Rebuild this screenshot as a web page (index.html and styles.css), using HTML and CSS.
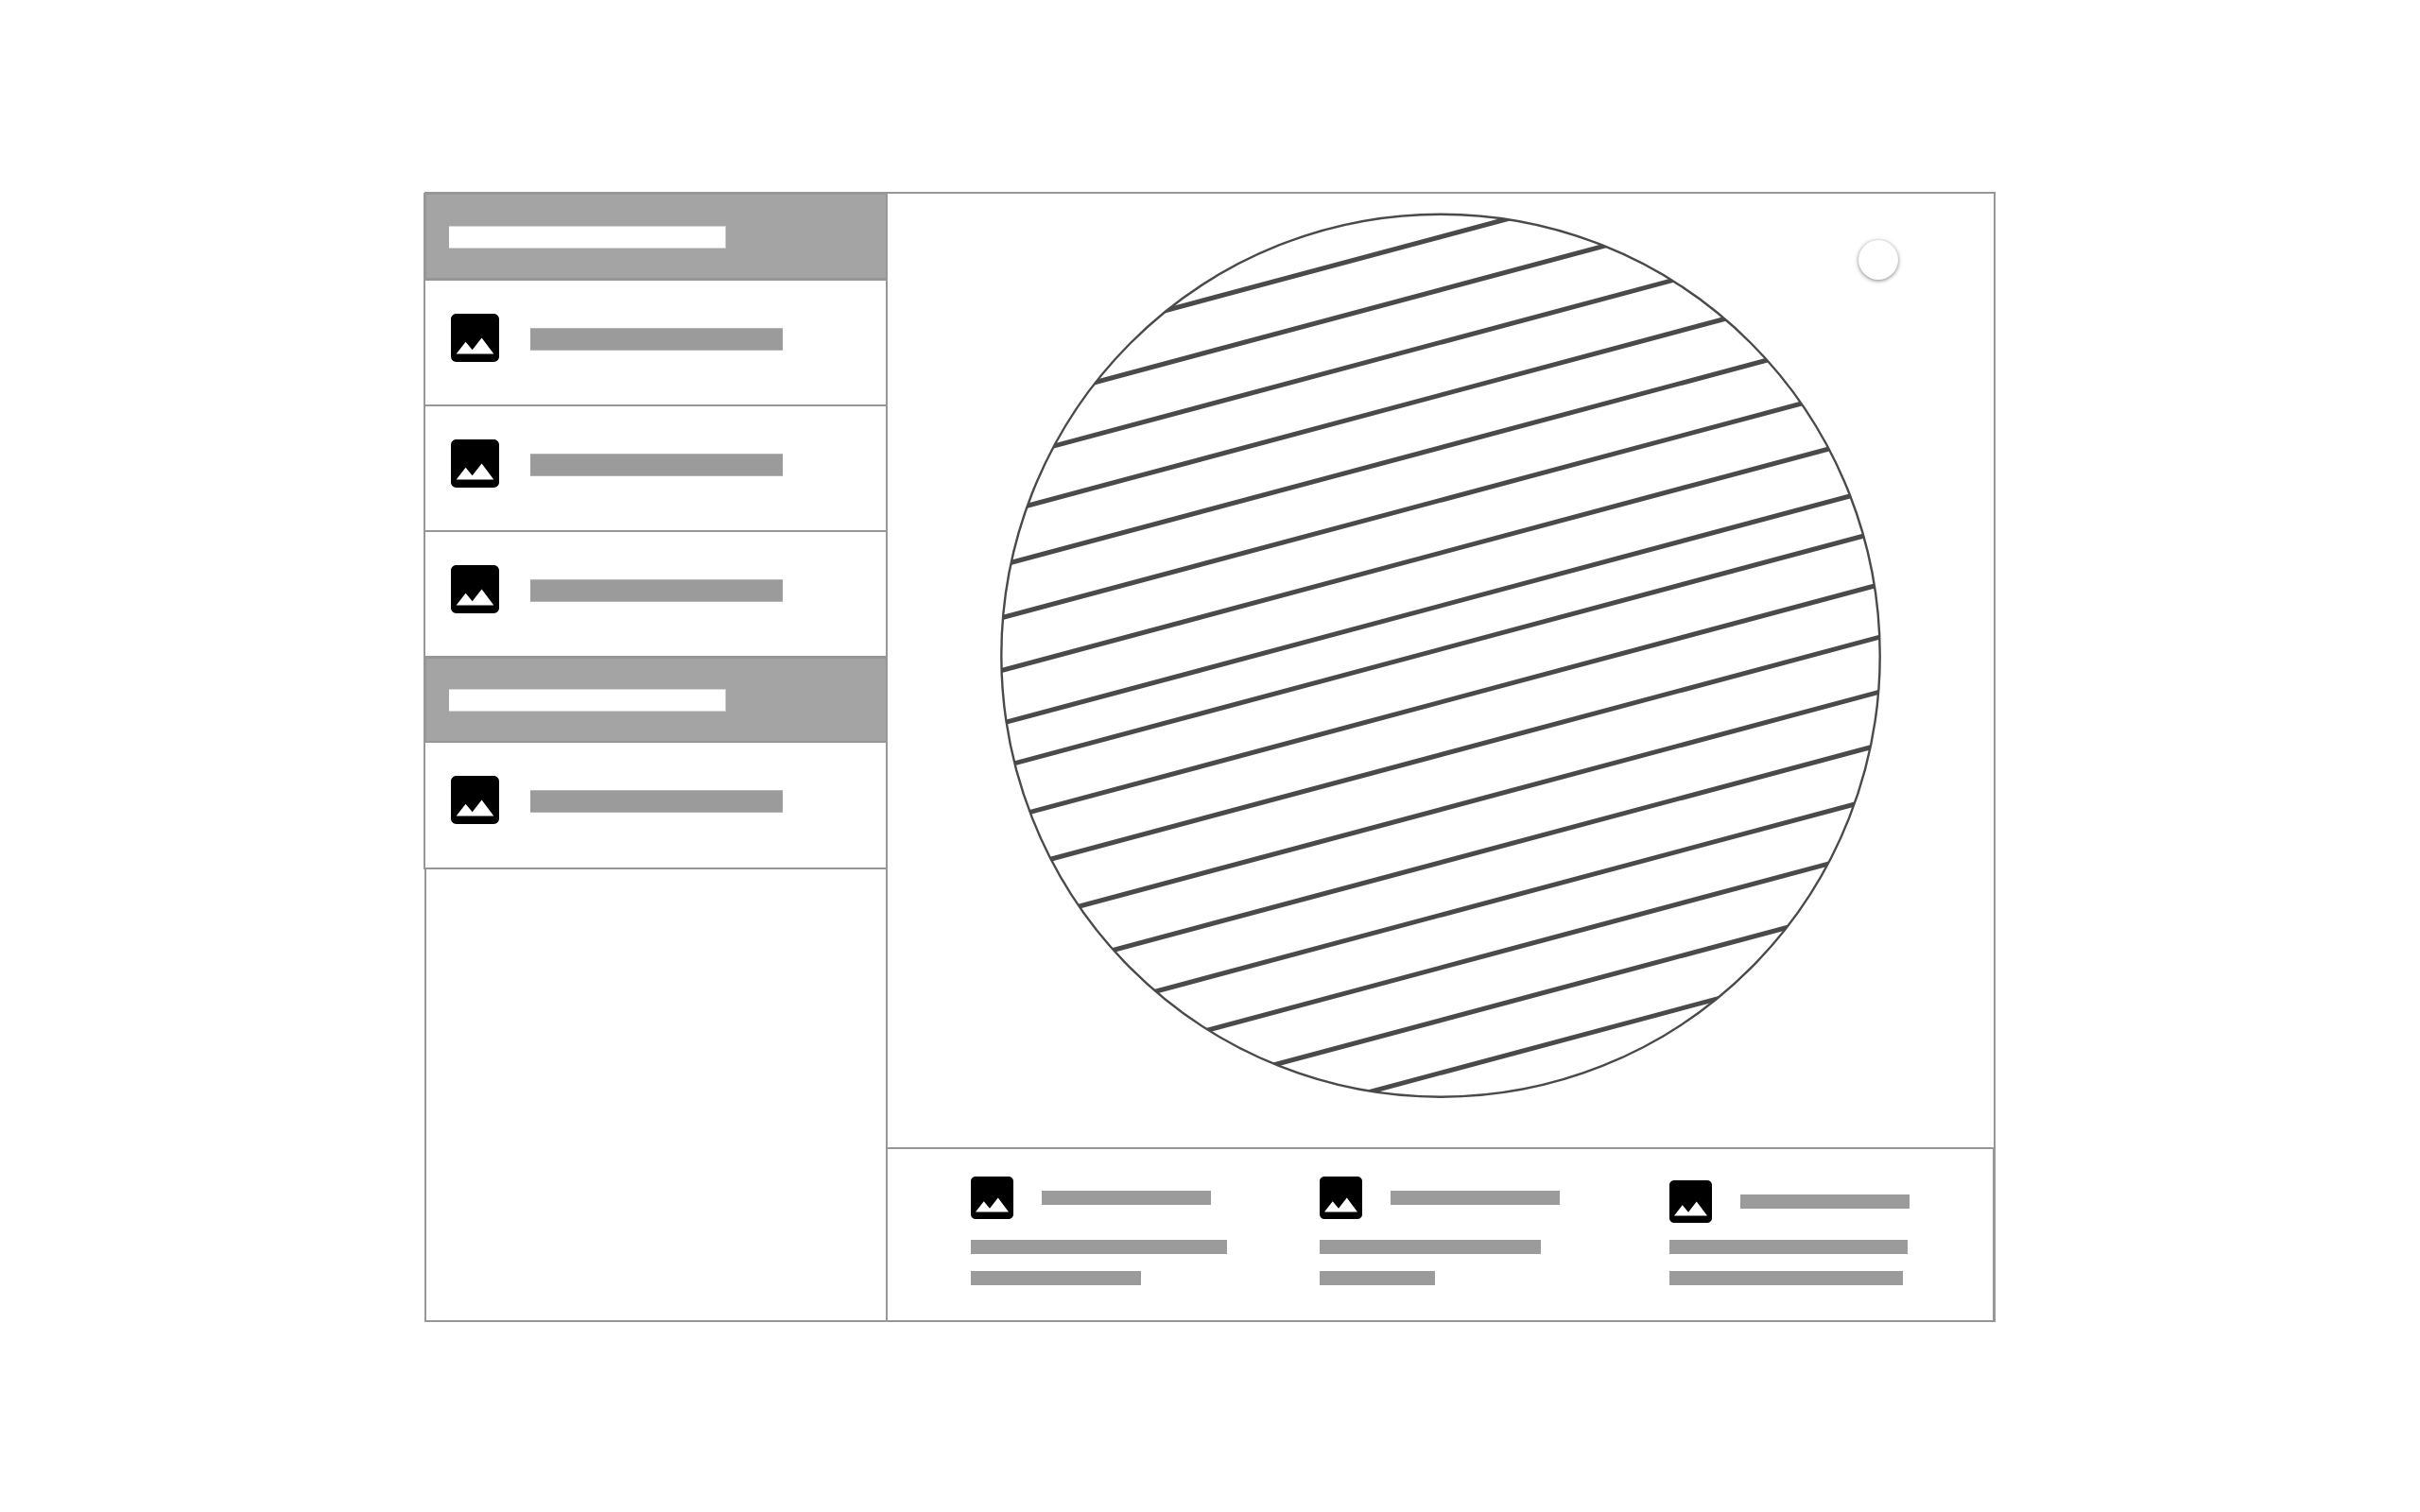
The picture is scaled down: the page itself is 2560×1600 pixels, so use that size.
FILE: index.html
```html
<!DOCTYPE html>
<html lang="en">
<head>
<meta charset="utf-8">
<meta name="viewport" content="width=device-width, initial-scale=1">
<title>Wireframe</title>
<link rel="stylesheet" href="styles.css">
</head>
<body>
<svg class="sprite" aria-hidden="true">
  <symbol id="image" viewBox="3 3 18 18">
    <path d="M21 19V5c0-1.1-.9-2-2-2H5c-1.1 0-2 .9-2 2v14c0 1.1.9 2 2 2h14c1.1 0 2-.9 2-2zM8.5 13.5l2.5 3.01L14.5 12l4.5 6H5l3.500-4.500z"/>
  </symbol>
</svg>
<div class="frame">
  <aside class="sidebar">
    <div class="list">
      <div class="section section-first"><span class="section-bar"></span></div>
      <div class="item"><svg class="icon"><use href="#image"/></svg><span class="bar"></span></div>
      <div class="item"><svg class="icon"><use href="#image"/></svg><span class="bar"></span></div>
      <div class="item"><svg class="icon"><use href="#image"/></svg><span class="bar"></span></div>
      <div class="section"><span class="section-bar"></span></div>
      <div class="item item-last"><svg class="icon"><use href="#image"/></svg><span class="bar"></span></div>
    </div>
  </aside>
  <main class="main">
    <section class="stage">
      <svg class="disc" viewBox="1058 225 932 937" aria-hidden="true">
        <defs>
          <clipPath id="disc-clip"><ellipse cx="1524" cy="693.7" rx="465" ry="467.500"/></clipPath>
        </defs>
        <g clip-path="url(#disc-clip)">
          <path class="stripes" d="M1040 380.300L2010 120.400M1040 436.300L2010 176.400M1040 492L2010 232.100M1040 547.700L2010 287.800M1040 603.300L2010 343.400M1040 659L2010 399.100M1040 714.700L2010 454.800M1040 770.700L2010 510.800M1040 816.700L2010 556.800M1040 872.700L2010 612.800M1040 928.300L2010 668.400M1040 986.300L2010 726.400M1040 1042.300L2010 782.400M1040 1098L2010 838.100M1040 1153.700L2010 893.800M1040 1209.300L2010 949.400M1040 1265L2010 1005.100"/>
        </g>
        <ellipse class="rim" cx="1524" cy="693.7" rx="464.700" ry="467"/>
      </svg>
      <button class="knob" type="button" aria-label="Toggle"></button>
    </section>
    <section class="cards">
      <article class="card">
        <div class="card-head"><svg class="card-icon"><use href="#image"/></svg><span class="line line-title"></span></div>
        <span class="line line-271"></span>
        <span class="line line-180"></span>
      </article>
      <article class="card">
        <div class="card-head"><svg class="card-icon"><use href="#image"/></svg><span class="line line-title"></span></div>
        <span class="line line-234"></span>
        <span class="line line-122"></span>
      </article>
      <article class="card card-low">
        <div class="card-head"><svg class="card-icon"><use href="#image"/></svg><span class="line line-title"></span></div>
        <span class="line line-252"></span>
        <span class="line line-247"></span>
      </article>
    </section>
  </main>
</div>
</body>
</html>
```
FILE: styles.css
```css
:root {
  --line: #979797;
  --bar: #9b9b9b;
  --header: #a4a4a4;
  --ink: #4a4a4a;
}

* {
  box-sizing: border-box;
}

body {
  margin: 0;
  padding: 203px 24px;
  background: #fff;
  font-family: "Liberation Sans", sans-serif;
}

.sprite {
  position: absolute;
  width: 0;
  height: 0;
}

.frame {
  display: grid;
  grid-template-columns: 488px 1fr;
  max-width: 1662px;
  margin: 0 auto;
  border: 2px solid var(--line);
}

/* Sidebar: the list overlaps the frame's own border */
.sidebar {
  border-right: 2px solid var(--line);
}

.list {
  display: flex;
  flex-direction: column;
  margin: -1px -2px 0 -3px;
}

.section {
  height: 92px;
  margin-top: -2px;
  padding: 32px 24px 0;
  border: 2px solid var(--line);
  border-width: 3px 2px 2px 3px;
  background: var(--header);
}

.section-first {
  height: 93px;
  margin-top: 0;
  padding-top: 33px;
  border-width: 2px 2px 3px 3px;
}

.section-bar {
  display: block;
  width: 293px;
  height: 24px;
  border: 1px solid #d4d4d4;
  border-left-width: 0;
  background: #fff;
}

.item {
  display: flex;
  align-items: flex-start;
  gap: 33px;
  height: 135px;
  margin-top: -2px;
  padding: 35px 27px 0;
  border: 2px solid var(--line);
  background: #fff;
}

.item-last {
  height: 136px;
}

.icon {
  width: 51px;
  height: 51px;
}

.bar {
  width: 267px;
  height: 24px;
  margin-top: 15px;
  border: 1px solid #b4b4b4;
  border-width: 1px 0;
  background: var(--bar);
}

.main {
  display: flex;
  flex-direction: column;
  min-width: 0;
}

.stage {
  position: relative;
  padding: 20px 119px 52px;
}

.disc {
  display: block;
  width: 100%;
  height: auto;
}

.stripes {
  fill: none;
  stroke: var(--ink);
  stroke-width: 5;
}

.rim {
  fill: none;
  stroke: var(--ink);
  stroke-width: 2.4;
}

.knob {
  position: absolute;
  top: 49px;
  right: 101px;
  width: 42px;
  height: 42px;
  padding: 0;
  border: 0;
  border-radius: 50%;
  background: #fff;
  box-shadow: 0 1px 4px rgba(0, 0, 0, 0.5);
}

.cards {
  display: grid;
  grid-template-columns: repeat(3, 1fr);
  column-gap: 98px;
  padding: 29px 71px 37px 88px;
  border-top: 2px solid var(--line);
  border-right: 1px solid var(--line);
}

.card {
  display: flex;
  flex-direction: column;
  gap: 18px;
}

.card-head {
  display: flex;
  align-items: flex-start;
  gap: 30px;
  padding-bottom: 4px;
}

.card-low .card-head {
  padding: 4px 0 0;
}

.card-icon {
  flex: none;
  width: 45px;
  height: 45px;
}

.line {
  height: 15px;
  max-width: 100%;
  background: var(--bar);
}

.line-title {
  width: 179px;
  margin-top: 15px;
}

.line-271 { width: 271px; }
.line-252 { width: 252px; }
.line-247 { width: 247px; }
.line-234 { width: 234px; }
.line-180 { width: 180px; }
.line-122 { width: 122px; }
```
